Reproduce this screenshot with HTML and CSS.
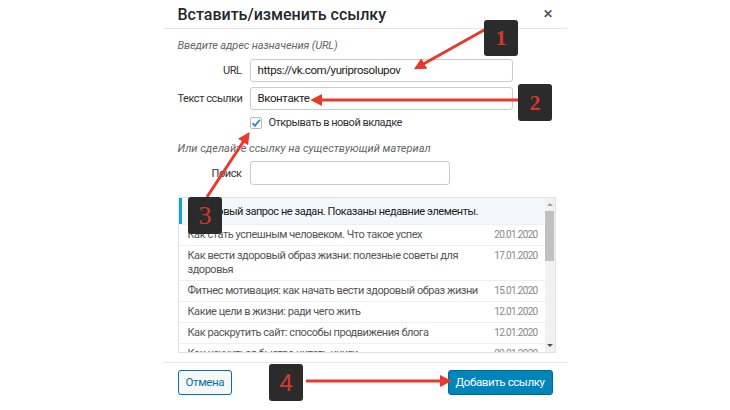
FILE: index.html
```html
<!DOCTYPE html>
<html lang="ru">
<head>
    <meta charset="UTF-8">
    <title>Вставить/изменить ссылку</title>
    <link rel="stylesheet" href="styles.css">
</head>
<body>
    <div class="dialog">
        <div class="dialog-head">
            <h1 class="dialog-title">Вставить/изменить ссылку</h1>
            <span class="close">&#x2715;</span>
        </div>
        <div class="dialog-body">
            <p class="hint">Введите адрес назначения (URL)</p>
            <div class="row">
                <label class="label">URL</label>
                <div class="field">https://vk.com/yuriprosolupov</div>
            </div>
            <div class="row">
                <label class="label">Текст ссылки</label>
                <div class="field">Вконтакте</div>
            </div>
            <div class="check-row">
                <span class="checkbox">
                    <svg width="10" height="10" viewBox="0 0 10 10"><path d="M1.5 5.2 L4 7.8 L8.8 1.8" fill="none" stroke="#1e8cbe" stroke-width="1.8"/></svg>
                </span>
                <span>Открывать в новой вкладке</span>
            </div>
            <p class="hint hint-second">Или сделайте ссылку на существующий материал</p>
            <div class="row">
                <label class="label">Поиск</label>
                <div class="field field-search"></div>
            </div>
            <div class="results">
                <div class="results-list">
                    <div class="notice">Поисковый запрос не задан. Показаны недавние элементы.</div>
                    <div class="item"><span class="item-title">Как стать успешным человеком. Что такое успех</span><span class="date">20.01.2020</span></div>
                    <div class="item"><span class="item-title">Как вести здоровый образ жизни: полезные советы для здоровья</span><span class="date">17.01.2020</span></div>
                    <div class="item"><span class="item-title">Фитнес мотивация: как начать вести здоровый образ жизни</span><span class="date">15.01.2020</span></div>
                    <div class="item"><span class="item-title">Какие цели в жизни: ради чего жить</span><span class="date">12.01.2020</span></div>
                    <div class="item"><span class="item-title">Как раскрутить сайт: способы продвижения блога</span><span class="date">12.01.2020</span></div>
                    <div class="item"><span class="item-title">Как научиться быстро читать книги</span><span class="date">09.01.2020</span></div>
                </div>
                <div class="scrollbar">
                    <span class="arrow-up"></span>
                    <span class="thumb"></span>
                    <span class="arrow-down"></span>
                </div>
            </div>
        </div>
        <div class="dialog-foot">
            <button class="btn btn-cancel">Отмена</button>
            <button class="btn btn-primary">Добавить ссылку</button>
        </div>
    </div>

    <svg class="arrows" width="730" height="410" viewBox="0 0 730 410">
        <defs>
            <marker id="head" markerWidth="4" markerHeight="4" refX="2.4" refY="2" orient="auto">
                <path d="M0 0 L4 2 L0 4 Z" fill="#e8392c"/>
            </marker>
        </defs>
        <g stroke="#e8392c" stroke-width="3" fill="none" marker-end="url(#head)">
            <line x1="486" y1="29" x2="418" y2="67"/>
            <line x1="518" y1="100" x2="315" y2="100"/>
            <line x1="207" y1="197" x2="247" y2="136"/>
            <line x1="306" y1="381" x2="447" y2="381"/>
        </g>
    </svg>
    <div class="badge badge-1">1</div>
    <div class="badge badge-2">2</div>
    <div class="badge badge-3">3</div>
    <div class="badge badge-4">4</div>
</body>
</html>
```

FILE: styles.css
```css
body {
    margin: 0;
    width: 730px;
    height: 410px;
    background: #ffffff;
    font-family: Roboto, 'Noto Sans', sans-serif;
    color: #444;
    position: relative;
    overflow: hidden;
}
.dialog {
    width: 403px;
    margin: 0 auto;
}
.dialog-head {
    height: 28px;
    display: flex;
    align-items: center;
    justify-content: space-between;
    padding: 0 14px;
    border-bottom: 1px solid #e5e5e5;
}
.dialog-title {
    margin: 0;
    font-size: 16px;
    font-weight: 500;
    color: #23282d;
}
.close {
    font-size: 12px;
    font-weight: bold;
    color: #555;
}
.dialog-body {
    padding: 0 12px 0 14px;
}
.hint {
    margin: 10px 0 0;
    font-size: 11px;
    font-style: italic;
    color: #666;
    line-height: 14px;
    letter-spacing: -0.15px;
}
.hint-second {
    margin-top: 13px;
    letter-spacing: 0;
}
.row {
    display: flex;
    align-items: center;
    margin-top: 5px;
}
.row:first-of-type {
    margin-top: 6px;
}
.label {
    flex: none;
    width: 72px;
    box-sizing: border-box;
    text-align: right;
    padding-right: 8px;
    font-size: 11px;
    letter-spacing: -0.45px;
    color: #333;
    white-space: nowrap;
}
.field {
    width: 263px;
    height: 23px;
    box-sizing: border-box;
    border: 1px solid #ccc;
    border-radius: 3px;
    padding: 0 7px;
    font-size: 11.5px;
    letter-spacing: -0.4px;
    color: #222;
    line-height: 21px;
}
.field-search {
    width: 200px;
    height: 24px;
}
.check-row {
    display: flex;
    align-items: center;
    margin: 6px 0 0 72px;
    font-size: 11px;
    letter-spacing: -0.5px;
    color: #333;
}
.checkbox {
    width: 12px;
    height: 12px;
    box-sizing: border-box;
    border: 1px solid #b4b9be;
    border-radius: 2px;
    margin-right: 7px;
    display: flex;
    align-items: center;
    justify-content: center;
}
.results {
    display: flex;
    margin-top: 12px;
    width: 378px;
    height: 156px;
    box-sizing: border-box;
    border: 1px solid #e1e1e1;
    overflow: hidden;
}
.results-list {
    flex: 1;
    font-size: 11px;
    letter-spacing: -0.45px;
    color: #555;
}
.notice {
    height: 26px;
    display: flex;
    align-items: center;
    padding-left: 6px;
    border-left: 3px solid #1aa0cf;
    background: #f2f8fb;
    color: #222;
}
.item {
    display: flex;
    justify-content: space-between;
    padding: 3px 7px 3px 9px;
    line-height: 14px;
    border-top: 1px solid #efefef;
}
.item-title {
    width: 297px;
}
.date {
    font-size: 10px;
    letter-spacing: -0.7px;
    color: #888;
}
.scrollbar {
    width: 10px;
    background: #f1f1f1;
    display: flex;
    flex-direction: column;
    align-items: center;
}
.arrow-up, .arrow-down {
    width: 0;
    height: 0;
    margin: 5px 0;
    border-left: 3px solid transparent;
    border-right: 3px solid transparent;
}
.arrow-up {
    border-bottom: 3px solid #a3a3a3;
}
.arrow-down {
    border-top: 3px solid #505050;
    margin-top: auto;
}
.thumb {
    width: 9px;
    height: 50px;
    background: #c1c1c1;
}
.dialog-foot {
    margin-top: 9px;
    border-top: 1px solid #e5e5e5;
    padding: 7px 14px;
    display: flex;
    justify-content: space-between;
}
.btn {
    height: 25px;
    font-family: inherit;
    font-size: 11.5px;
    letter-spacing: -0.4px;
    line-height: 21px;
    border-radius: 3px;
    padding: 0 7px;
}
.btn-cancel {
    background: #f7f7f7;
    border: 1px solid #0073aa;
    color: #0073aa;
}
.btn-primary {
    background: #0085ba;
    border: 1px solid #006799;
    color: #fff;
}
.arrows {
    position: absolute;
    left: 0;
    top: 0;
}
.badge {
    position: absolute;
    width: 34px;
    height: 36px;
    background: #2b2b2b;
    border-radius: 3px;
    color: #d0392b;
    font-family: 'Liberation Serif', serif;
    font-weight: bold;
    font-size: 22px;
    display: flex;
    align-items: center;
    justify-content: center;
}
.badge-1 { left: 484px; top: 20px; }
.badge-2 { left: 518px; top: 84px; height: 37px; }
.badge-3 { left: 188px; top: 197px; height: 37px; font-size: 26px; font-weight: normal; }
.badge-4 { left: 269px; top: 364px; height: 37px; font-size: 24px; font-weight: normal; font-family: Roboto, sans-serif; }
```
